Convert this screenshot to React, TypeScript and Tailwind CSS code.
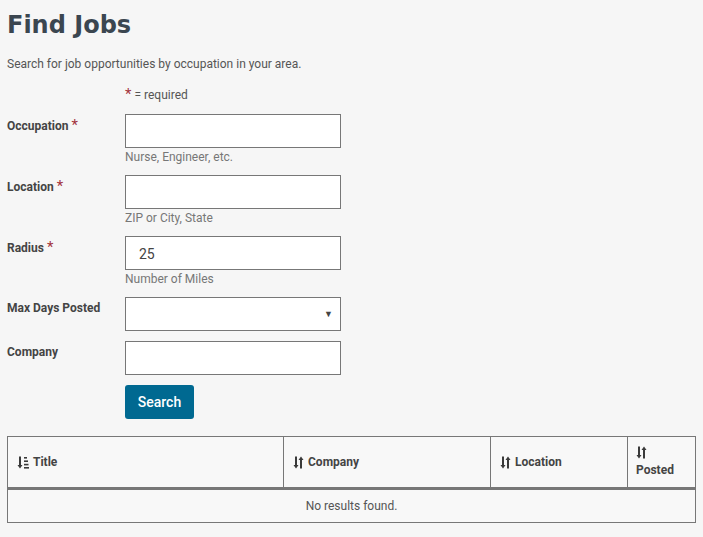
import React from "react";

const FIELDS = [
	{ label: "Occupation", required: true, help: "Nurse, Engineer, etc." },
	{ label: "Location", required: true, help: "ZIP or City, State" },
	{ label: "Radius", required: true, help: "Number of Miles", value: "25" },
	{ label: "Max Days Posted", select: true },
	{ label: "Company" },
];

function SortIcon() {
	return (
		<svg width="11" height="13" viewBox="0 0 11 13" className="shrink-0">
			<path d="M3 0.5v10" stroke="#3a3a3a" strokeWidth="2" />
			<path d="M0.5 9l2.5 3.5L5.5 9z" fill="#3a3a3a" />
			<path d="M8 12.5v-10" stroke="#3a3a3a" strokeWidth="2" />
			<path d="M5.5 4L8 0.5L10.5 4z" fill="#3a3a3a" />
		</svg>
	);
}

function SortDownIcon() {
	return (
		<svg width="12" height="13" viewBox="0 0 12 13" className="shrink-0">
			<path d="M3 0.5v10" stroke="#3a3a3a" strokeWidth="2" />
			<path d="M0.5 9l2.5 3.5L5.5 9z" fill="#3a3a3a" />
			<rect x="7" y="1" width="3" height="1.6" fill="#3a3a3a" />
			<rect x="7" y="4.4" width="4" height="1.6" fill="#3a3a3a" />
			<rect x="7" y="7.8" width="4.5" height="1.6" fill="#3a3a3a" />
			<rect x="7" y="11" width="5" height="1.6" fill="#3a3a3a" />
		</svg>
	);
}

export default function App() {
	return (
		<div
			className="min-h-screen bg-[#f6f6f6] px-[7px] pt-[9px] text-[#444]"
			style={{ fontFamily: "Roboto, sans-serif" }}
		>
			<h1
				className="text-[24px] font-bold leading-[32px] text-[#3b4650]"
				style={{ fontFamily: "'DejaVu Sans', sans-serif" }}
			>
				Find Jobs
			</h1>

			<p className="mt-[15px] text-[12px] leading-[16px] text-[#555]">
				Search for job opportunities by occupation in your area.
			</p>

			<div className="mt-[14px] pl-[118px] text-[12px] leading-[16px] text-[#555]">
				<span className="text-[15px] text-[#a3343d]">*</span> = required
			</div>

			<form className="mt-[11px] flex flex-col">
				{FIELDS.map((f) => (
					<div key={f.label} className="mb-[10px] flex">
						<label className="w-[118px] shrink-0 pt-[3px] text-[12px] font-bold leading-[16px] text-[#444]">
							{f.label}
							{f.required && (
								<span className="ml-[3px] text-[15px] font-normal text-[#a3343d]">
									*
								</span>
							)}
						</label>
						<div className="flex flex-col">
							<div className="relative h-[34px] w-[216px] border border-[#777] bg-white">
								{f.value && (
									<span className="absolute left-[13px] top-[7px] text-[14px] text-[#444]">
										{f.value}
									</span>
								)}
								{f.select && (
									<span className="absolute right-[7px] top-[12px] text-[9px] leading-none text-[#444]">
										▼
									</span>
								)}
							</div>
							{f.help && (
								<span className="mt-[2px] h-[15px] text-[12px] leading-[15px] text-[#777]">
									{f.help}
								</span>
							)}
						</div>
					</div>
				))}
				<div className="flex pl-[118px]">
					<button
						type="button"
						className="h-[34px] w-[69px] rounded-[3px] bg-[#006991] text-[14px] font-medium text-white"
					>
						Search
					</button>
				</div>
			</form>

			<table className="mt-[17px] w-[689px] border-collapse border border-[#777] bg-[#f8f8f8] text-[12px]">
				<thead>
					<tr className="h-[52px] border-b-[3px] border-[#777]">
						<th className="w-[276px] border-r border-[#777] px-[9px] text-left font-bold">
							<span className="flex items-center gap-[4px]">
								<SortDownIcon />
								Title
							</span>
						</th>
						<th className="w-[207px] border-r border-[#777] px-[9px] text-left font-bold">
							<span className="flex items-center gap-[4px]">
								<SortIcon />
								Company
							</span>
						</th>
						<th className="w-[137px] border-r border-[#777] px-[9px] text-left font-bold">
							<span className="flex items-center gap-[4px]">
								<SortIcon />
								Location
							</span>
						</th>
						<th className="px-[8px] text-left font-bold">
							<span className="flex flex-col gap-[4px] leading-[15px]">
								<SortIcon />
								Posted
							</span>
						</th>
					</tr>
				</thead>
				<tbody>
					<tr className="h-[34px]">
						<td colSpan={4} className="text-center text-[#555]">
							No results found.
						</td>
					</tr>
				</tbody>
			</table>
		</div>
	);
}
